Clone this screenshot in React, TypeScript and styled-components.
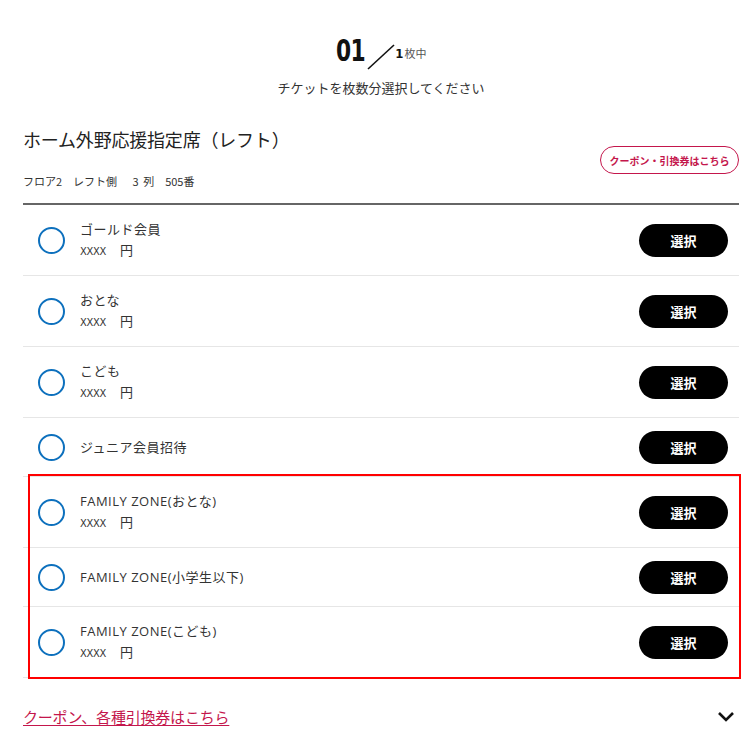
import React from "react";
import styled, { createGlobalStyle } from "styled-components";

const GlobalStyle = createGlobalStyle`
  html, body { margin: 0; padding: 0; background: #fff; }
  body {
    font-family: "Noto Sans CJK JP", "Noto Sans", sans-serif;
    color: #333;
  }
`;

const Page = styled.div`
  width: 750px;
  box-sizing: border-box;
  padding: 0 11px 0 23px;
`;

const CountHeader = styled.div`
  display: flex;
  flex-direction: column;
  align-items: center;
  padding-top: 30px;
`;

const CountRow = styled.div`
  display: flex;
  align-items: flex-end;
  height: 40px;
`;

const BigCount = styled.span`
  font-family: "DejaVu Sans Condensed", "Liberation Sans Narrow", sans-serif;
  font-weight: 700;
  font-size: 31px;
  line-height: 40px;
  color: #111;
  display: inline-block;
  margin-left: -8px;
  transform: scaleX(0.78);
  transform-origin: right center;
  letter-spacing: -1px;
`;

const Slash = styled.svg`
  width: 28px;
  height: 28px;
  margin: 0 0 0 3px;
`;

const Total = styled.span`
  font-size: 13px;
  line-height: 20px;
  margin-bottom: 6px;
  color: #111;
  font-weight: 700;
  font-family: "DejaVu Sans Condensed", sans-serif;
`;

const TotalUnit = styled.span`
  font-size: 11px;
  font-weight: 400;
  color: #555;
  margin-left: 1px;
  font-family: "Noto Sans CJK JP", sans-serif;
`;

const Instruction = styled.p`
  margin: 9px 0 0;
  font-size: 13px;
  line-height: 18px;
  color: #333;
`;

const SeatHeader = styled.div`
  display: flex;
  justify-content: space-between;
  align-items: flex-end;
  margin-top: 29px;
  padding-bottom: 14px;
  border-bottom: 2px solid #666;
`;

const SeatInfo = styled.div`
  display: flex;
  flex-direction: column;
`;

const SeatTitle = styled.h2`
  margin: 0;
  font-size: 18px;
  font-weight: 400;
  line-height: 26px;
  color: #222;
  letter-spacing: -0.2px;
`;

const SeatDetail = styled.div`
  margin-top: 21px;
  font-size: 11px;
  line-height: 16px;
  color: #333;
  word-spacing: 2px;
`;

const CouponPill = styled.button`
  height: 28px;
  width: 139px;
  margin-bottom: 15px;
  border: 1.5px solid #c4164c;
  border-radius: 14px;
  background: #fff;
  color: #c4164c;
  font-family: "Noto Sans CJK JP", sans-serif;
  font-size: 10px;
  font-weight: 700;
  padding: 0;
  cursor: pointer;
`;

const List = styled.div`
  display: flex;
  flex-direction: column;
`;

const Highlight = styled.div`
  position: relative;
  display: flex;
  flex-direction: column;
  &::after {
    content: "";
    position: absolute;
    top: -3px;
    left: 5px;
    right: -2px;
    bottom: -1px;
    border: 2px solid #ff0000;
    pointer-events: none;
  }
`;

const Row = styled.div<{ $tall?: boolean }>`
  display: flex;
  align-items: center;
  padding: ${(p) => (p.$tall ? "14px 11px 13px 15px" : "13px 11px 12px 15px")};
  min-height: ${(p) => (p.$tall ? "42px" : "32px")};
  border-bottom: 1px solid #e6e6e6;
`;

const Radio = styled.span`
  width: 23px;
  height: 23px;
  border: 2.5px solid #0d70bd;
  border-radius: 50%;
  flex-shrink: 0;
`;

const Label = styled.div`
  flex: 1;
  margin-left: 15px;
  display: flex;
  flex-direction: column;
  font-family: "Open Sans", "Noto Sans CJK JP", sans-serif;
  font-size: 13px;
  line-height: 21px;
  letter-spacing: 0.5px;
  color: #333;
`;

const Name = styled.span``;

const Price = styled.span`
  display: flex;
  align-items: baseline;
`;

const PriceValue = styled.span`
  font-size: 11px;
  font-family: "DejaVu Sans Condensed", sans-serif;
  letter-spacing: -0.3px;
  margin-right: 14px;
  color: #333;
`;

const SelectButton = styled.button`
  width: 89px;
  height: 33px;
  border: none;
  border-radius: 17px;
  background: #000;
  color: #fff;
  font-family: "Noto Sans CJK JP", sans-serif;
  font-size: 13px;
  font-weight: 700;
  padding: 0;
  cursor: pointer;
`;

const Footer = styled.div`
  display: flex;
  justify-content: space-between;
  align-items: center;
  margin-top: 27px;
`;

const CouponLink = styled.a`
  font-size: 15px;
  line-height: 24px;
  color: #c4164c;
  text-decoration: underline;
  text-underline-offset: 2px;
  letter-spacing: -0.2px;
`;

const Chevron = styled.svg`
  width: 18px;
  height: 12px;
  margin-right: 4px;
`;

type Item = { name: string; price?: boolean };

const items: Item[] = [
  { name: "ゴールド会員", price: true },
  { name: "おとな", price: true },
  { name: "こども", price: true },
  { name: "ジュニア会員招待" },
];

const familyItems: Item[] = [
  { name: "FAMILY ZONE(おとな)", price: true },
  { name: "FAMILY ZONE(小学生以下)" },
  { name: "FAMILY ZONE(こども)", price: true },
];

const TicketRow = ({ item }: { item: Item }) => (
  <Row $tall={item.price}>
    <Radio />
    <Label>
      <Name>{item.name}</Name>
      {item.price && (
        <Price>
          <PriceValue>XXXX</PriceValue>円
        </Price>
      )}
    </Label>
    <SelectButton>選択</SelectButton>
  </Row>
);

export default function App() {
  return (
    <>
      <GlobalStyle />
      <Page>
        <CountHeader>
          <CountRow>
            <BigCount>01</BigCount>
            <Slash viewBox="0 0 28 28">
              <line x1="1" y1="27" x2="27" y2="3" stroke="#111" strokeWidth="1.6" />
            </Slash>
            <Total>
              1<TotalUnit>枚中</TotalUnit>
            </Total>
          </CountRow>
          <Instruction>チケットを枚数分選択してください</Instruction>
        </CountHeader>

        <SeatHeader>
          <SeatInfo>
            <SeatTitle>ホーム外野応援指定席（レフト）</SeatTitle>
            <SeatDetail>フロア2　レフト側　 3 列　505番</SeatDetail>
          </SeatInfo>
          <CouponPill>クーポン・引換券はこちら</CouponPill>
        </SeatHeader>

        <List>
          {items.map((it) => (
            <TicketRow key={it.name} item={it} />
          ))}
          <Highlight>
            {familyItems.map((it) => (
              <TicketRow key={it.name} item={it} />
            ))}
          </Highlight>
        </List>

        <Footer>
          <CouponLink href="#">クーポン、各種引換券はこちら</CouponLink>
          <Chevron viewBox="0 0 18 12">
            <polyline points="2,2 9,9 16,2" fill="none" stroke="#111" strokeWidth="2.6" />
          </Chevron>
        </Footer>
      </Page>
    </>
  );
}
